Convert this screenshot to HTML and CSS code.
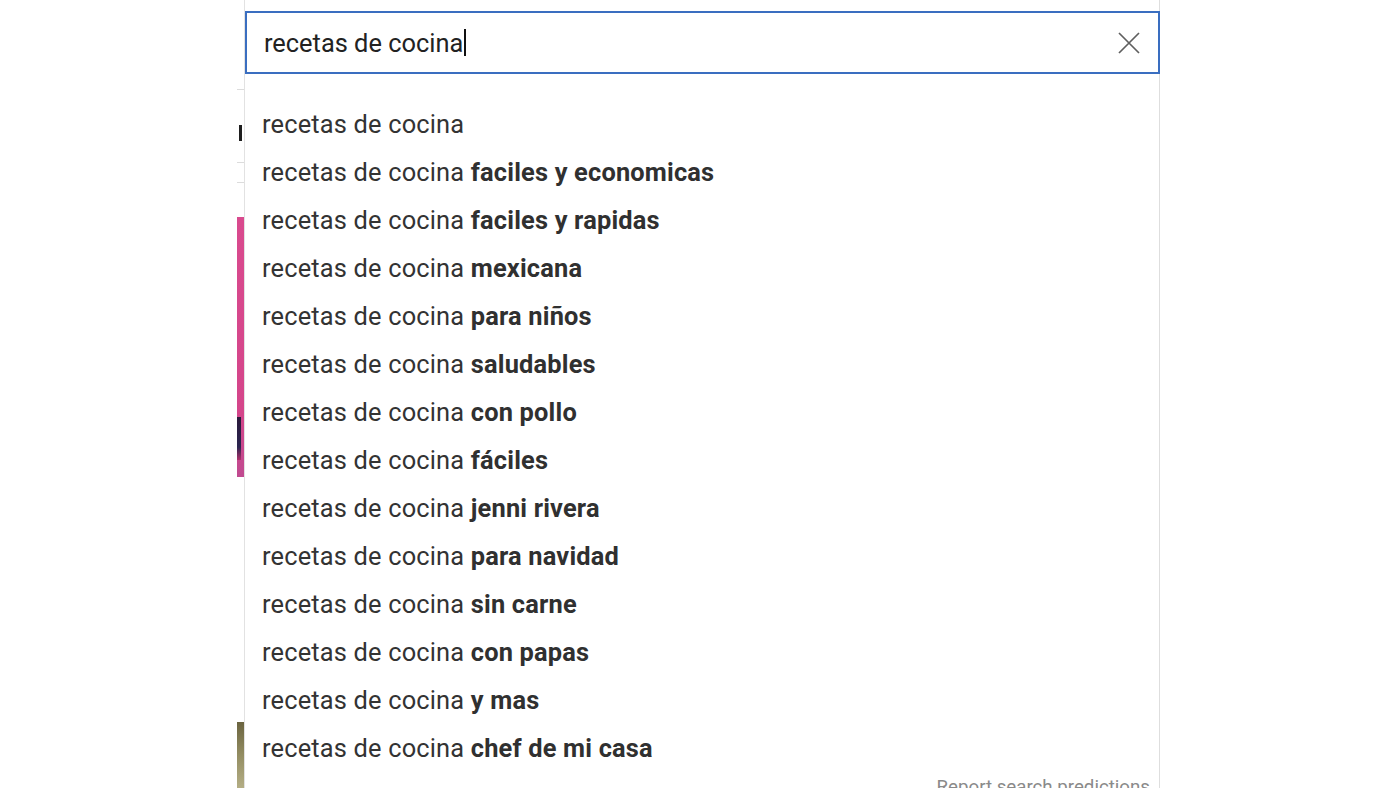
FILE: index.html
```html
<!DOCTYPE html>
<html lang="es">
<head>
<meta charset="utf-8">
<title>recetas de cocina</title>
<link rel="stylesheet" href="styles.css">
</head>
<body>
<div class="stage">
  <div class="page-edge">
    <div class="edge-gap edge-gap-a"></div>
    <div class="edge-rule"></div>
    <div class="edge-gap edge-gap-b"></div>
    <div class="edge-glyph"></div>
    <div class="edge-gap edge-gap-c"></div>
    <div class="edge-rule"></div>
    <div class="edge-gap edge-gap-d"></div>
    <div class="edge-rule"></div>
    <div class="edge-gap edge-gap-e"></div>
    <div class="edge-thumb edge-thumb-pink"><div class="edge-dark"></div></div>
    <div class="edge-gap edge-gap-f"></div>
    <div class="edge-thumb edge-thumb-olive"></div>
  </div>
  <div class="search">
    <div class="search-box">
      <span class="query">recetas de cocina</span><span class="caret"></span>
      <span class="spacer"></span>
      <svg class="clear" width="24" height="24" viewBox="0 0 24 24" aria-hidden="true">
        <path d="M2 2 L22 22 M22 2 L2 22" stroke="#5f5f5f" stroke-width="1.7" fill="none"/>
      </svg>
    </div>
    <ul class="suggestions">
      <li>recetas de cocina</li>
      <li>recetas de cocina <b>faciles y economicas</b></li>
      <li>recetas de cocina <b>faciles y rapidas</b></li>
      <li>recetas de cocina <b>mexicana</b></li>
      <li>recetas de cocina <b>para niños</b></li>
      <li>recetas de cocina <b>saludables</b></li>
      <li>recetas de cocina <b>con pollo</b></li>
      <li>recetas de cocina <b>fáciles</b></li>
      <li>recetas de cocina <b>jenni rivera</b></li>
      <li>recetas de cocina <b>para navidad</b></li>
      <li>recetas de cocina <b>sin carne</b></li>
      <li>recetas de cocina <b>con papas</b></li>
      <li>recetas de cocina <b>y mas</b></li>
      <li>recetas de cocina <b>chef de mi casa</b></li>
    </ul>
    <div class="report">Report search predictions</div>
  </div>
</div>
</body>
</html>
```
FILE: styles.css
```css
html, body {
  margin: 0;
  padding: 0;
  background: #ffffff;
  height: 788px;
  overflow: hidden;
}
body {
  font-family: Roboto, "Noto Sans", Arial, sans-serif;
  color: #2e2e2e;
}
.stage {
  display: flex;
  padding-left: 237px;
  height: 788px;
}
.page-edge {
  width: 8px;
  flex-shrink: 0;
  display: flex;
  flex-direction: column;
  border-right: 1px solid #e2e2e2;
  box-sizing: border-box;
}
.page-edge > div { flex-shrink: 0; }
.edge-gap-a { height: 89px; }
.edge-gap-b { height: 35px; }
.edge-gap-c { height: 21px; }
.edge-gap-d { height: 19px; }
.edge-gap-e { height: 34px; }
.edge-gap-f { height: 245px; }
.edge-rule { height: 1px; background: #dcdcdc; }
.edge-glyph { height: 16px; width: 3px; margin-left: 2px; background: #1e1e1e; }
.edge-thumb-pink {
  height: 260px;
  width: 7px;
  background: linear-gradient(#d94a8e, #d4458a 75%, #c04a90 100%);
  display: flex;
  flex-direction: column;
  justify-content: flex-end;
  padding-bottom: 17px;
  box-sizing: border-box;
}
.edge-dark { height: 43px; width: 4px; background: linear-gradient(#2a1a3a, #2b2550 70%, #b0306a); }
.page-edge > .edge-thumb-olive {
  flex: 1 1 auto;
  width: 7px;
  background: linear-gradient(#6b6440, #938d62 50%, #b4ae85);
}
.search {
  width: 915px;
  flex-shrink: 0;
  display: flex;
  flex-direction: column;
  border-right: 1px solid #dedede;
  box-sizing: border-box;
}
.search > * { flex-shrink: 0; }
.search-box {
  margin-top: 11px;
  height: 63px;
  box-sizing: border-box;
  border: 2px solid #3a6ec0;
  display: flex;
  align-items: center;
  padding: 0 17px 0 17px;
  margin-right: -1px;
}
.query {
  font-size: 25.4px;
  color: #222;
}
.caret {
  width: 2px;
  height: 27px;
  background: #111;
  margin-left: 1px;
}
.spacer { flex: 1; }
.clear { display: block; }
.suggestions {
  list-style: none;
  margin: 0;
  padding: 26px 0 0 0;
}
.suggestions li {
  height: 48px;
  line-height: 48px;
  padding-left: 17px;
  font-size: 25.4px;
  letter-spacing: 0.18px;
  color: #333;
}
.suggestions b {
  font-weight: 700;
  color: #303030;
}
.report {
  text-align: right;
  padding-right: 9px;
  font-size: 18.7px;
  line-height: 22px;
  color: #8a8a8a;
  margin-top: 4px;
}
```
